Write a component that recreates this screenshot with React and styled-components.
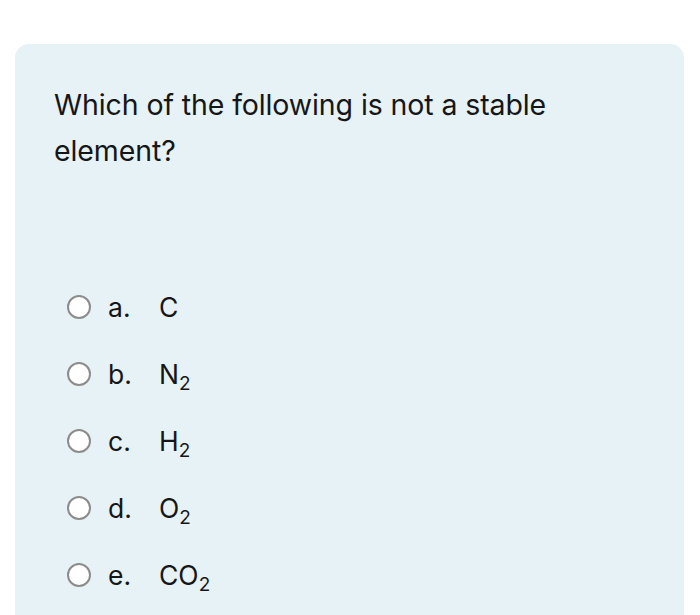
import React from 'react';
import styled, { createGlobalStyle } from 'styled-components';

const GlobalStyle = createGlobalStyle`
    html, body {
        margin: 0;
        padding: 0;
        background: #ffffff;
    }
    body {
        font-family: Inter, 'Noto Sans', sans-serif;
        color: #161618;
    }
`

const Page = styled.div`
    width: 700px;
    height: 615px;
    padding: 44px 16px 0 15px;
    box-sizing: border-box;
    overflow: hidden;
`

const Card = styled.div`
    background: #e6f2f5;
    border-radius: 14px 14px 0 0;
    height: 100%;
    padding: 38px 39px 0 39px;
    box-sizing: border-box;
`

const Question = styled.div`
    font-size: 28.5px;
    line-height: 46px;
    letter-spacing: -0.1px;
    max-width: 520px;
    margin: 0 0 113px;
`

const Options = styled.div`
    display: flex;
    flex-direction: column;
    gap: 27px;
    padding-left: 13px;
`

const Option = styled.label`
    display: flex;
    align-items: center;
    height: 40px;
    font-size: 26.5px;
`

const Radio = styled.span`
    width: 20px;
    height: 20px;
    border-radius: 50%;
    border: 2.5px solid #8c8c8c;
    background: #ffffff;
    flex: none;
`

const Letter = styled.span`
    width: 51px;
    margin-left: 17px;
`

const Sub = styled.sub`
    font-size: 19px;
    vertical-align: -6px;
    line-height: 0;
`

const options = [
    { letter: 'a.', text: 'C' },
    { letter: 'b.', text: 'N', sub: '2' },
    { letter: 'c.', text: 'H', sub: '2' },
    { letter: 'd.', text: 'O', sub: '2' },
    { letter: 'e.', text: 'CO', sub: '2' },
];

const App = () => {
    return (
        <>
            <GlobalStyle />
            <Page>
                <Card>
                    <Question>Which of the following is not a stable element?</Question>
                    <Options>
                        {options.map((o) => (
                            <Option key={o.letter}>
                                <Radio />
                                <Letter>{o.letter}</Letter>
                                <span>
                                    {o.text}
                                    {o.sub && <Sub>{o.sub}</Sub>}
                                </span>
                            </Option>
                        ))}
                    </Options>
                </Card>
            </Page>
        </>
    );
};

export default App;
